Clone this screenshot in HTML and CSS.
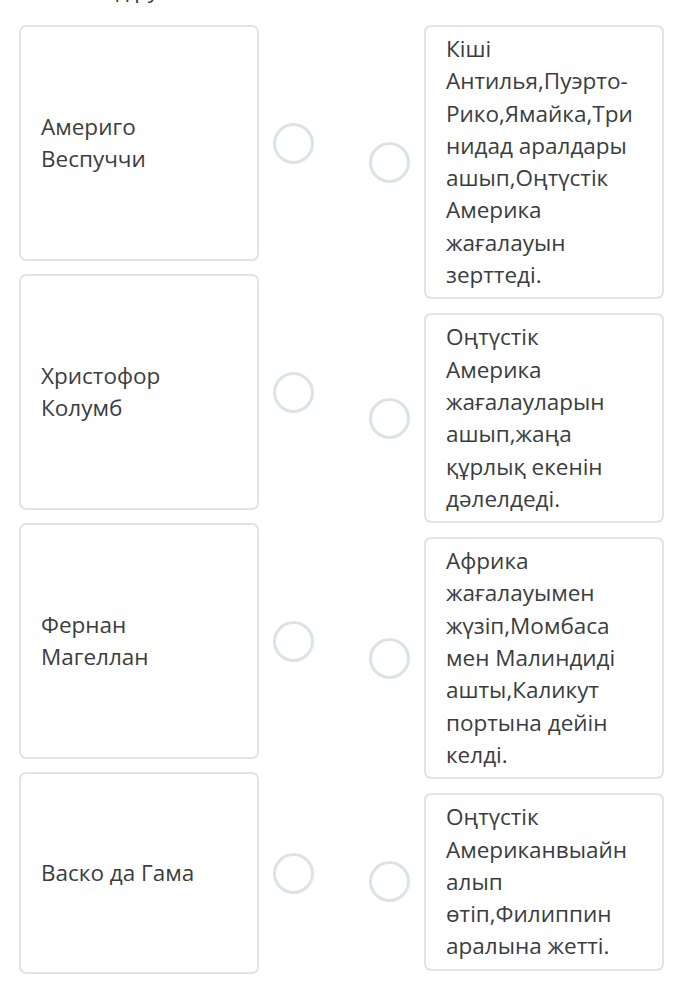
FILE: index.html
```html
<!DOCTYPE html>
<html lang="kk">
<head>
<meta charset="utf-8">
<title>Сәйкестендіру</title>
<link rel="stylesheet" href="styles.css">
</head>
<body>
<div class="page">
  <div class="title">Сәйкестендіру</div>
  <div class="match">
    <div class="col col-left">
      <div class="row">
        <div class="card card-left">Америго<br>Веспуччи</div>
        <span class="dot"></span>
      </div>
      <div class="row">
        <div class="card card-left">Христофор<br>Колумб</div>
        <span class="dot"></span>
      </div>
      <div class="row">
        <div class="card card-left">Фернан<br>Магеллан</div>
        <span class="dot"></span>
      </div>
      <div class="row">
        <div class="card card-left card-short">Васко да Гама</div>
        <span class="dot"></span>
      </div>
    </div>
    <div class="col col-right">
      <div class="row">
        <span class="dot"></span>
        <div class="card card-right">Кіші<br>Антилья,Пуэрто-<br>Рико,Ямайка,Три<br>нидад аралдары<br>ашып,Оңтүстік<br>Америка<br>жағалауын<br>зерттеді.</div>
      </div>
      <div class="row">
        <span class="dot"></span>
        <div class="card card-right">Оңтүстік<br>Америка<br>жағалауларын<br>ашып,жаңа<br>құрлық екенін<br>дәлелдеді.</div>
      </div>
      <div class="row">
        <span class="dot"></span>
        <div class="card card-right">Африка<br>жағалауымен<br>жүзіп,Момбаса<br>мен Малиндиді<br>ашты,Каликут<br>портына дейін<br>келді.</div>
      </div>
      <div class="row">
        <span class="dot"></span>
        <div class="card card-right">Оңтүстік<br>Американвыайн<br>алып<br>өтіп,Филиппин<br>аралына жетті.</div>
      </div>
    </div>
  </div>
</div>
</body>
</html>
```
FILE: styles.css
```css
html, body {
  margin: 0;
  padding: 0;
  background: #ffffff;
}
body {
  font-family: "Open Sans", "Noto Sans", "DejaVu Sans", sans-serif;
  color: #3a3d40;
  font-size: 22.5px;
  line-height: 32px;
}
.page {
  width: 683px;
  height: 1002px;
  overflow: hidden;
  padding: 0 19px;
  box-sizing: border-box;
}
.title {
  font-size: 22px;
  line-height: 32px;
  height: 32px;
  margin-top: -27px;
  margin-left: -14px;
  color: #3a3d40;
}
.match {
  display: flex;
  justify-content: space-between;
  margin-top: 20px;
}
.col {
  display: flex;
  flex-direction: column;
  width: 295px;
}
.col-left {
  gap: 13px;
}
.col-right {
  gap: 14px;
}
.row {
  display: flex;
  align-items: center;
  gap: 14px;
}
.card {
  box-sizing: border-box;
  width: 240px;
  flex: none;
  border: 2px solid #e3e3e3;
  border-radius: 7px;
  background: #ffffff;
  white-space: nowrap;
}
.card-left {
  height: 236px;
  padding: 0 20px;
  display: flex;
  align-items: center;
}
.card-short {
  height: 202px;
}
.card-right {
  line-height: 32.3px;
  padding: 6px 10px 6px 20px;
}
.dot {
  box-sizing: border-box;
  flex: none;
  width: 41px;
  height: 41px;
  border: 3.5px solid #dfe2e5;
  border-radius: 50%;
}
```
